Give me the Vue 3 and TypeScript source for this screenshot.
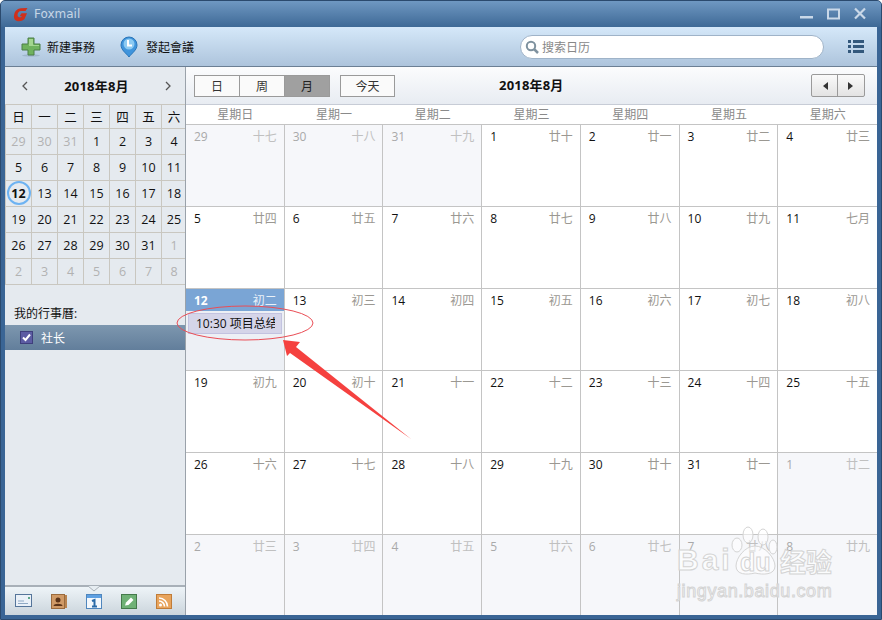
<script setup lang="ts">
interface Day { d: number; l: string; dim: boolean }
const lunar = '十七 十八 十九 廿十 廿一 廿二 廿三 廿四 廿五 廿六 廿七 廿八 廿九 七月 初二 初三 初四 初五 初六 初七 初八 初九 初十 十一 十二 十三 十四 十五 十六 十七 十八 十九 廿十 廿一 廿二 廿三 廿四 廿五 廿六 廿七 廿八 廿九'.split(' ')
const nums = [29, 30, 31, ...Array.from({ length: 31 }, (_, i) => i + 1), 1, 2, 3, 4, 5, 6, 7, 8]
const days: Day[] = nums.map((d, i) => ({ d, l: lunar[i], dim: i < 3 || i > 33 }))
const mini = ['日', '一', '二', '三', '四', '五', '六']
const weeks = ['星期日', '星期一', '星期二', '星期三', '星期四', '星期五', '星期六']
</script>

<template>
  <div class="win">
    <div class="title">
      <svg class="logo" width="16" height="15" viewBox="0 0 16 15">
        <path d="M14.500 1 L12.500 4 L8 4 C6 4 4.500 6 4.500 8 C4.500 10.500 7.500 11 9 9.500 L6.800 9 L8.500 6.200 L14 6.200 L11.500 12 C9.500 14 6.500 14.500 4 14 C1 13 .5 10 1.200 7.500 C2 3.500 5 1.500 8 1.300 Z" fill="#d0301c" />
      </svg>
      <span class="appname">Foxmail</span>
      <span class="spacer"></span>
      <svg width="70" height="14" viewBox="0 0 70 14" class="winbtns">
        <rect x="0" y="9" width="13" height="2.500" fill="#c9d8e8" />
        <rect x="28" y="2.500" width="11" height="9" fill="none" stroke="#c9d8e8" stroke-width="2" />
        <path d="M55 1.500 L65 11.500 M65 1.500 L55 11.500" stroke="#c9d8e8" stroke-width="2.200" />
      </svg>
    </div>
    <div class="toolbar">
      <div class="tool first">
        <svg width="20" height="20" viewBox="0 0 20 20">
          <ellipse cx="10" cy="18.500" rx="9" ry="1.200" fill="#8ea6bd" opacity=".6" />
          <path d="M7 1 H13 V7 H19 V13 H13 V18 H7 V13 H1 V7 H7 Z" fill="#6fb25e" stroke="#4c7f47" />
          <path d="M8 2 H12 V8 H18 V9 H8 Z" fill="#a3d68f" />
        </svg>
        <span>新建事務</span>
      </div>
      <div class="tool second">
        <svg width="18" height="22" viewBox="0 0 18 22">
          <path d="M9 21 C6 17 1 14 1 9 A8 8 0 0 1 17 9 C17 14 12 17 9 21 Z" fill="#3f94dc" stroke="#2b76b8" />
          <circle cx="9" cy="8" r="5.500" fill="#8ccaf2" />
          <path d="M8 4 V9.500 H12" fill="none" stroke="#fff" stroke-width="2" />
        </svg>
        <span>發起會議</span>
      </div>
      <span class="spacer"></span>
      <div class="search">
        <svg width="14" height="14" viewBox="0 0 14 14">
          <circle cx="6" cy="6" r="4.200" fill="none" stroke="#7f929f" stroke-width="2" />
          <path d="M9 9 L13 13" stroke="#7f929f" stroke-width="2.500" />
        </svg>
        <span>搜索日历</span>
      </div>
      <svg class="menu" width="16" height="13" viewBox="0 0 16 13">
        <path d="M0 0 H3 V3 H0 Z M5 0 H16 V3 H5 Z M0 5 H3 V8 H0 Z M5 5 H16 V8 H5 Z M0 10 H3 V13 H0 Z M5 10 H16 V13 H5 Z" fill="#33587c" />
      </svg>
    </div>
    <div class="body">
      <aside class="side">
        <div class="minihead">
          <svg width="7" height="10" viewBox="0 0 7 10"><path d="M6 1 L2 5 L6 9" fill="none" stroke="#555" stroke-width="1.300" /></svg>
          <b>2018年8月</b>
          <svg width="7" height="10" viewBox="0 0 7 10"><path d="M1 1 L5 5 L1 9" fill="none" stroke="#555" stroke-width="1.300" /></svg>
        </div>
        <div class="minigrid">
          <div v-for="m in mini" :key="m" class="mc">{{ m }}</div>
          <div v-for="(x, i) in days" :key="i" class="mc" :class="{ dim: x.dim, today: i === 14 }">{{ x.d }}</div>
        </div>
        <div class="mycal">我的行事曆:</div>
        <div class="calrow">
          <svg width="13" height="13" viewBox="0 0 13 13">
            <rect x=".5" y=".5" width="12" height="12" fill="#5c5ca3" stroke="#3f3f7c" />
            <path d="M3 6.500 L5.500 9 L10 3.500" fill="none" stroke="#fff" stroke-width="2" />
          </svg>
          <span>社长</span>
        </div>
        <span class="spacer"></span>
        <div class="dock">
          <svg class="notch" width="12" height="6" viewBox="0 0 12 6"><path d="M0 0 L6 5 L12 0" fill="#e6edf2" stroke="#a8b0b8" /></svg>
          <svg width="17" height="14" viewBox="0 0 17 14">
            <rect x=".5" y=".5" width="16" height="12" fill="#eaf1f8" stroke="#55759a" />
            <path d="M3 7 H9 M3 9.500 H13" stroke="#8fa9c4" />
            <rect x="13" y="3" width="2" height="2" fill="#5fa88a" />
          </svg>
          <svg width="16" height="15" viewBox="0 0 16 15">
            <rect x=".5" y=".5" width="13" height="14" fill="#d09a66" stroke="#9a6a3c" />
            <rect x="14" y="1" width="2" height="13" fill="#b98450" />
            <circle cx="7" cy="6" r="2.500" fill="#5c3418" />
            <path d="M2.500 12 C2.500 9 11.500 9 11.500 12 Z" fill="#5c3418" />
          </svg>
          <svg width="16" height="15" viewBox="0 0 16 15">
            <rect x=".5" y=".5" width="15" height="14" fill="#f4f8fc" stroke="#4f86bd" />
            <rect x="1" y="1" width="14" height="3" fill="#5ea0e2" />
            <path d="M6 7 L8.500 6 V12 M6 12.500 H11" fill="none" stroke="#2d6ca8" stroke-width="2" />
          </svg>
          <svg width="16" height="15" viewBox="0 0 16 15">
            <rect x=".5" y=".5" width="15" height="14" fill="#6fb176" stroke="#44794b" />
            <path d="M4 11.500 L5 8.500 L10 3.500 L12.500 6 L7.500 11 Z" fill="#fff" />
          </svg>
          <svg width="16" height="15" viewBox="0 0 16 15">
            <rect x=".5" y=".5" width="15" height="14" fill="#e8a45c" stroke="#c07c38" />
            <circle cx="4.500" cy="11" r="1.500" fill="#fff" />
            <path d="M3 7 A5.500 5.500 0 0 1 8.500 12.500 M3 4 A8.500 8.500 0 0 1 11.500 12.500" fill="none" stroke="#fff" stroke-width="1.600" />
          </svg>
        </div>
      </aside>
      <main class="main">
        <div class="mainbar">
          <div class="seg">
            <span>日</span><span>周</span><span class="on">月</span>
          </div>
          <div class="todaybtn">今天</div>
          <b class="maintitle">2018年8月</b>
          <div class="navs">
            <span><svg width="6" height="8" viewBox="0 0 6 8"><path d="M6 0 V8 L1 4 Z" fill="#333" /></svg></span>
            <span><svg width="6" height="8" viewBox="0 0 6 8"><path d="M0 0 V8 L5 4 Z" fill="#333" /></svg></span>
          </div>
        </div>
        <div class="weekhead">
          <div v-for="w in weeks" :key="w">{{ w }}</div>
        </div>
        <div class="grid">
          <div v-for="(x, i) in days" :key="i" class="cell" :class="{ off: x.dim, cur: i === 14 }">
            <div class="chead">
              <span class="num">{{ x.d }}</span>
              <span class="lun">{{ x.l }}</span>
            </div>
            <div v-if="i === 14" class="event"><span>10:30 项目总结</span></div>
          </div>
        </div>
      </main>
    </div>
    <svg class="marks" width="882" height="620" viewBox="0 0 882 620">
      <ellipse cx="245" cy="323" rx="68" ry="17" fill="none" stroke="#ea4d55" stroke-width="1" />
      <path d="M283 340 L300 342 L296 347 L411 439 L290 353 L287 356 Z" fill="#f5413f" />
    </svg>
    <div class="wm">
      <svg class="paw" width="48" height="52" viewBox="0 0 48 52">
        <g fill="rgba(255,255,255,.55)" stroke="#d4d4d4">
          <ellipse cx="17" cy="9" rx="5" ry="8" />
          <ellipse cx="32" cy="11" rx="5" ry="8" />
          <ellipse cx="6" cy="19" rx="5" ry="7" />
          <ellipse cx="42" cy="21" rx="4" ry="7" />
          <path d="M24 20 C34 20 44 32 44 40 C44 49 32 49 24 47 C16 49 5 49 5 40 C5 32 14 20 24 20 Z" />
        </g>
      </svg>
      <span class="wm1">Bai</span>
      <span class="wm2">du</span>
      <span class="wm3">经验</span>
      <span class="wm4">jingyan.baidu.com</span>
    </div>
  </div>
</template>

<style scoped>
.win {
  position: relative;
  width: 882px;
  height: 620px;
  box-sizing: border-box;
  padding: 0 4px 4px;
  background: #3a6595;
  border: 1px solid #2b4a6e;
  border-radius: 5px 5px 0 0;
  display: flex;
  flex-direction: column;
  overflow: hidden;
  font-family: "Open Sans", "Noto Sans CJK SC", sans-serif;
  font-size: 12px;
  color: #111;
}
.spacer { flex: 1; }
.title {
  height: 26px;
  margin: 0 -4px;
  padding: 0 11px 0 12px;
  display: flex;
  align-items: center;
  background: linear-gradient(#6f98c2, #3e6996);
  flex: none;
}
.appname { margin-left: 5px; color: #c6d6e6; font-family: "DejaVu Sans", sans-serif; font-size: 12px; }
.toolbar {
  height: 40px;
  flex: none;
  display: flex;
  align-items: center;
  background: linear-gradient(#d5e8f9, #adc4dc);
  border-bottom: 1px solid #6b7f94;
  box-sizing: border-box;
  padding-right: 13px;
}
.tool { display: flex; align-items: center; color: #111; }
.first { margin-left: 16px; gap: 6px; }
.second { margin-left: 25px; gap: 8px; }
.search {
  width: 298px;
  height: 22px;
  border: 1px solid #9fb3c8;
  border-radius: 12px;
  background: #fff;
  display: flex;
  align-items: center;
  gap: 3px;
  padding-left: 4px;
  margin-right: 24px;
  color: #888;
}
.body { flex: 1; display: flex; min-height: 0; }
.side {
  width: 180px;
  flex: none;
  background: #e5eaef;
  border-right: 1px solid #9aa2aa;
  display: flex;
  flex-direction: column;
  overflow: hidden;
}
.minihead {
  height: 37px;
  flex: none;
  display: flex;
  align-items: center;
  justify-content: space-between;
  padding: 0 13px 0 16px;
}
.minihead b { font-size: 13px; letter-spacing: .2px; }
.minigrid {
  display: grid;
  grid-template-columns: repeat(6, 26px) 24px;
  grid-template-rows: 24px repeat(6, 26px);
  border-top: 1px solid #c9c7c0;
  border-left: 1px solid #c9c7c0;
  flex: none;
}
.mc {
  border-right: 1px solid #c9c7c0;
  border-bottom: 1px solid #c9c7c0;
  display: flex;
  align-items: center;
  justify-content: center;
  font-size: 12.500px;
  position: relative;
  box-sizing: border-box;
}
.mc:nth-child(7n) { border-right: 0; }
.dim { color: #b2b2b2; }
.today { font-weight: 700; }
.today::before {
  content: "";
  position: absolute;
  left: 1px;
  top: 0;
  width: 20px;
  height: 20px;
  border: 2px solid #6db3f2;
  border-radius: 50%;
}
.mycal { margin: 19px 0 0 9px; height: 19px; line-height: 19px; }
.calrow {
  height: 25px;
  margin-top: 2px;
  flex: none;
  display: flex;
  align-items: center;
  gap: 8px;
  padding-left: 15px;
  background: linear-gradient(#7d97af, #627e9b);
  color: #fff;
}
.dock {
  position: relative;
  height: 30px;
  flex: none;
  box-sizing: border-box;
  border-top: 2px solid #a8b0b8;
  background: linear-gradient(#eef4f8, #cbd5dc);
  display: flex;
  align-items: center;
  justify-content: space-between;
  padding: 0 13px 0 10px;
}
.notch { position: absolute; left: 83px; top: -1px; }
.main { flex: 1; min-width: 0; min-height: 0; display: flex; flex-direction: column; background: #fff; }
.mainbar {
  height: 38px;
  flex: none;
  position: relative;
  display: flex;
  align-items: center;
  padding-left: 8px;
  background: linear-gradient(#fbfcfd, #e8ecf2);
  border-bottom: 1px solid #c7ccd6;
  box-sizing: border-box;
}
.seg {
  display: grid;
  grid-template-columns: 45px 45px 44px;
  height: 22px;
  border: 1px solid #9a9a9a;
  box-sizing: border-box;
  background: #fafafa;
  color: #333;
  width: 136px;
}
.seg span { display: flex; align-items: center; justify-content: center; border-right: 1px solid #9a9a9a; }
.seg span:last-child { border-right: 0; }
.seg .on { background: #a0a0a0; color: #222; }
.todaybtn {
  margin-left: 10px;
  width: 55px;
  height: 22px;
  border: 1px solid #9a9a9a;
  box-sizing: border-box;
  display: flex;
  align-items: center;
  justify-content: center;
  background: #fafafa;
  color: #333;
}
.maintitle { position: absolute; left: 313px; top: 9px; font-size: 13px; line-height: 19px; letter-spacing: .2px; }
.navs {
  margin-left: auto;
  margin-right: 12px;
  display: flex;
  height: 21px;
  border: 1px solid #9a9a9a;
  border-radius: 2px;
  background: linear-gradient(#fafafa, #e3e3e3);
}
.navs span { width: 26px; display: flex; align-items: center; justify-content: center; }
.navs span:first-child { width: 25px; border-right: 1px solid #9a9a9a; }
.weekhead {
  height: 20px;
  flex: none;
  display: grid;
  grid-template-columns: repeat(7, 1fr);
  color: #8a8a8a;
  text-align: center;
  line-height: 19px;
  border-bottom: 1px solid #c4c4c4;
  box-sizing: border-box;
}
.grid {
  flex: 1;
  display: grid;
  grid-template-columns: repeat(7, 1fr);
  grid-template-rows: repeat(5, 82px) 80px;
  min-height: 0;
}
.cell {
  border-right: 1px solid #c4c4c4;
  border-bottom: 1px solid #c4c4c4;
  box-sizing: border-box;
  min-width: 0;
  overflow: hidden;
}
.cell:nth-child(7n) { border-right: 0; }
.cell:nth-last-child(-n + 7) { border-bottom: 0; }
.off { background: #f6f7fa; }
.off .num { color: #a9a9a9; }
.off .lun { color: #c0c0c0; }
.chead {
  height: 22px;
  display: flex;
  justify-content: space-between;
  align-items: center;
  padding: 0 7px 0 8px;
}
.lun { color: #9b9892; }
.cur { background: #edf0f5; }
.cur .chead { background: #7aa5d5; color: #fff; }
.cur .num { font-weight: 700; color: #fff; }
.cur .lun { color: #eaf1f8; }
.event {
  margin: 2px 2px 0;
  height: 21px;
  box-sizing: border-box;
  border: 1px solid #c3c3e0;
  background: #d5d5e9;
  padding: 0 6px 0 7px;
  line-height: 19px;
  white-space: nowrap;
  overflow: hidden;
  color: #111;
}
.event span { display: block; overflow: hidden; }
.marks { position: absolute; left: -1px; top: -1px; pointer-events: none; }
.wm {
  position: absolute;
  left: 676px;
  top: 525px;
  width: 160px;
  height: 76px;
  pointer-events: none;
  font-family: "Liberation Sans", "Noto Sans CJK SC", sans-serif;
  color: rgba(255, 255, 255, .65);
  -webkit-text-stroke: 1px #d4d4d4;
}
.paw { position: absolute; left: 54px; top: 0; }
.wm1 { position: absolute; left: 0; top: 19px; font-size: 30px; font-weight: 700; line-height: 30px; letter-spacing: 3px; }
.wm2 { position: absolute; left: 63px; top: 24px; font-size: 25px; font-weight: 700; line-height: 24px; }
.wm3 { position: absolute; left: 103px; top: 22px; font-size: 26px; font-weight: 700; line-height: 30px; }
.wm4 { position: absolute; left: 0; top: 55px; font-size: 18px; line-height: 20px; letter-spacing: .6px; }
</style>

<style>
html, body { margin: 0; overflow: hidden; background: #fff; }
</style>
